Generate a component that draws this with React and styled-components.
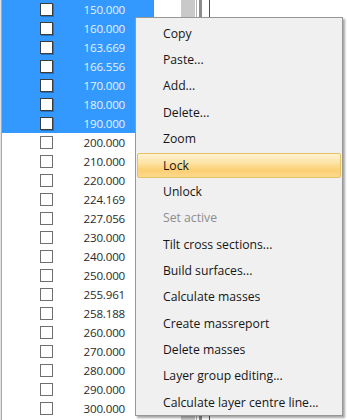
import React from 'react';
import styled, { createGlobalStyle } from 'styled-components';

const GlobalStyle = createGlobalStyle`
  html, body {
    margin: 0;
    padding: 0;
    background: #ffffff;
  }
`;

const selBlue = '#3399ff';
const rowHeight = 19;
const itemHeight = 26.36;

const rows = [
  '150.000', '160.000', '163.669', '166.556', '170.000', '180.000', '190.000',
  '200.000', '210.000', '220.000', '224.169', '227.056', '230.000', '240.000',
  '250.000', '255.961', '258.188', '260.000', '270.000', '280.000', '290.000',
  '300.000',
];
const selectedCount = 7;

const menuItems = [
  { label: 'Copy' },
  { label: 'Paste...' },
  { label: 'Add...' },
  { label: 'Delete...' },
  { label: 'Zoom' },
  { label: 'Lock', hot: true },
  { label: 'Unlock' },
  { label: 'Set active', disabled: true },
  { label: 'Tilt cross sections...' },
  { label: 'Build surfaces...' },
  { label: 'Calculate masses' },
  { label: 'Create massreport' },
  { label: 'Delete masses' },
  { label: 'Layer group editing...' },
  { label: 'Calculate layer centre line...' },
];

const Screen = styled.div`
  position: relative;
  width: 347px;
  height: 420px;
  overflow: hidden;
  display: flex;
  font-family: 'Open Sans', 'Noto Sans', sans-serif;
  background: #ffffff;
`;

const ListPanel = styled.div`
  width: 152px;
  flex-shrink: 0;
  border-left: 1px solid #e2e2e2;
  box-shadow: inset 1px 0 0 #a9a9a9;
  padding-left: 1px;
  display: flex;
  flex-direction: column;
`;

const Row = styled.div`
  height: ${rowHeight}px;
  display: flex;
  align-items: center;
  padding: 0 29px 0 38px;
  background: ${(p) => (p.selected ? selBlue : '#ffffff')};
`;

const Check = styled.span`
  width: 13px;
  height: 13px;
  box-sizing: border-box;
  background: #ffffff;
  border: 1px solid ${(p) => (p.selected ? '#3c3c3c' : '#6f6f6f')};
  box-shadow: ${(p) => (p.selected ? '1px 1px 0 rgba(0,0,0,0.25)' : 'none')};
`;

const Value = styled.span`
  margin-left: auto;
  font-size: 11.6px;
  letter-spacing: -0.2px;
  line-height: 1;
  color: ${(p) => (p.selected ? '#e6f1ff' : '#2b2b2b')};
`;

const Gutter = styled.div`
  width: 27px;
  flex-shrink: 0;
`;

const ScrollStrip = styled.div`
  width: 14px;
  flex-shrink: 0;
  background: #c9c9c9;
`;

const Split = styled.div`
  width: 8px;
  flex-shrink: 0;
  display: flex;
  gap: 2px;
  padding-left: 1px;
  & > i {
    display: block;
    width: 1px;
    background: #b3b3b3;
  }
  & > i + i {
    width: 3px;
    background: #8c8c8c;
  }
`;

const Canvas = styled.div`
  flex: 1;
  border-left: 1px solid #3b3bf0;
  margin-left: 5px;
`;

const Menu = styled.div`
  position: absolute;
  left: 135px;
  top: 17px;
  width: 208px;
  box-sizing: border-box;
  padding-top: 2px;
  background: #f0f0f0;
  border: 1px solid #979797;
  box-shadow: 2px 2px 2px rgba(0, 0, 0, 0.35);
  display: flex;
  flex-direction: column;
`;

const Item = styled.div`
  height: ${itemHeight}px;
  box-sizing: border-box;
  display: flex;
  align-items: center;
  padding-left: 27px;
  font-size: 12.2px;
  color: ${(p) => (p.disabled ? '#8d8d8d' : '#161616')};
  white-space: nowrap;
  ${(p) =>
    p.hot &&
    `
    margin: 1px 1px 0 1px;
    height: ${itemHeight - 1}px;
    padding-left: 25px;
    border: 1px solid #e5c365;
    border-radius: 2px;
    background: linear-gradient(#fff3d2 0%, #fde3a3 40%, #fbcf72 70%, #fcd98c 100%);
  `}
`;

export default function App() {
  return (
    <>
      <GlobalStyle />
      <Screen>
        <ListPanel>
          {rows.map((v, i) => {
            const sel = i < selectedCount;
            return (
              <Row key={v} selected={sel}>
                <Check selected={sel} />
                <Value selected={sel}>{v}</Value>
              </Row>
            );
          })}
        </ListPanel>
        <Gutter />
        <ScrollStrip />
        <Split>
          <i />
          <i />
        </Split>
        <Canvas />
        <Menu>
          {menuItems.map((m) => (
            <Item key={m.label} hot={m.hot} disabled={m.disabled}>
              {m.label}
            </Item>
          ))}
        </Menu>
      </Screen>
    </>
  );
}
